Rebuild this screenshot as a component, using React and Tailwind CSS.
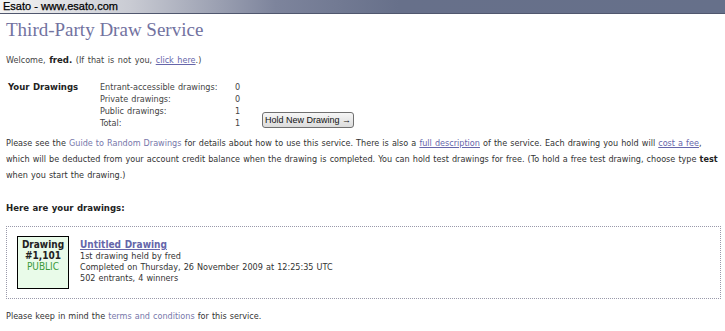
const body = {
  fontFamily: '"DejaVu Sans Condensed", "DejaVu Sans", Tahoma, sans-serif',
  wordSpacing: '0.5px',
}

function Header() {
  return (
    <div
      className="h-[14px] border-b border-[#50576e] bg-[linear-gradient(to_right,#f4f4f4_0%,#c9cbd3_18%,#7d849c_38%,#67708a_55%,#66708a_100%)] pl-[3px] text-[11px] leading-[13px] text-black"
      style={{ fontFamily: '"Liberation Sans", Arial, sans-serif', WebkitTextStroke: '0.25px #000', wordSpacing: 0 }}
    >
      Esato - www.esato.com
    </div>
  )
}

function Stats() {
  const rows = [
    ['Entrant-accessible drawings:', '0'],
    ['Private drawings:', '0'],
    ['Public drawings:', '1'],
    ['Total:', '1'],
  ]
  return (
    <div className="mt-[14px] flex items-end pl-[2px]">
      <div className="w-[92px] self-start text-[9.5px] leading-[12px] font-bold text-[#222]">Your Drawings</div>
      <div className="w-[135px] text-[9px] leading-[12px] text-[#444]">
        {rows.map(([label]) => (
          <div key={label}>{label}</div>
        ))}
      </div>
      <div className="w-[27px] text-[9px] leading-[12px] text-[#444]">
        {rows.map(([label, v]) => (
          <div key={label}>{v}</div>
        ))}
      </div>
      <button
        className="mb-px flex h-[16px] w-[92px] shrink-0 items-center justify-center whitespace-nowrap rounded-[3px] border border-[#707070] bg-[linear-gradient(#f6f6f6,#dcdcdc)] px-0 text-[9px] leading-none text-[#111]"
        style={{ fontFamily: '"Liberation Sans", Arial, sans-serif', wordSpacing: 0 }}
      >
        Hold New Drawing →
      </button>
    </div>
  )
}

export default function App() {
  return (
    <div className="h-[331px] w-[725px] overflow-hidden bg-white" style={body}>
      <Header />
      <div className="px-[6px]">
        <h1
          className="mt-[4px] text-[19px] leading-[24px] text-[#72729f]"
          style={{ fontFamily: '"Liberation Serif", Georgia, serif', wordSpacing: 0 }}
        >
          Third-Party Draw Service
        </h1>

        <p className="mt-[11px] text-[9px] leading-[14px] text-[#444]" style={{ wordSpacing: '1px' }}>
          Welcome, <b className="text-[9.5px] text-[#222]">fred.</b> (If that is not you,{' '}
          <a className="text-[#6666aa] underline">click here</a>.)
        </p>

        <Stats />

        <p className="mt-[6px] text-[9px] leading-[16px] text-[#333]">
          Please see the <a className="text-[#7777aa]">Guide to Random Drawings</a> for details about how to use
          this service. There is also a <a className="text-[#6666aa] underline">full description</a> of the
          service. Each drawing you hold will <a className="text-[#6666aa] underline">cost a fee</a>, which will be
          deducted from your account credit balance when the drawing is completed. You can hold test drawings for
          free. (To hold a free test drawing, choose type <b className="text-[#222]">test</b> when you start the
          drawing.)
        </p>

        <h2 className="mt-[18px] text-[9.5px] leading-[14px] font-bold text-[#222]">Here are your drawings:</h2>

        <div className="mt-[11px] -mr-[2px] flex border border-dotted border-[#9999aa] pt-[9px] pr-2 pb-[9px] pl-[10px]">
          <div className="h-[53px] w-[52px] border border-black bg-[#e9fbe9] pt-[2px] text-center text-[10px] leading-[11px]">
            <div className="font-bold text-[#222]">Drawing</div>
            <div className="font-bold text-[#222]">#1,101</div>
            <div className="text-[#3a9a3a]">PUBLIC</div>
          </div>
          <div className="mt-[3px] ml-[11px] text-[9px] leading-[11px] text-[#333]">
            <a className="text-[10px] font-bold text-[#6666aa] underline">Untitled Drawing</a>
            <div>1st drawing held by fred</div>
            <div>Completed on Thursday, 26 November 2009 at 12:25:35 UTC</div>
            <div>502 entrants, 4 winners</div>
          </div>
        </div>

        <p className="mt-[10px] text-[9px] leading-[14px] text-[#333]">
          Please keep in mind the <a className="text-[#7777aa]">terms and conditions</a> for this service.
        </p>
      </div>
    </div>
  )
}
